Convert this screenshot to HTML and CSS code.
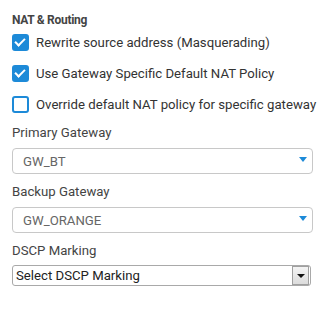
FILE: index.html
```html
<!DOCTYPE html>
<html lang="en">
<head>
  <meta charset="UTF-8" />
  <title>NAT & Routing</title>
  <link rel="stylesheet" href="styles.css">
</head>
<body>
  <section class="panel">
    <h4 class="panel-title">NAT &amp; Routing</h4>

    <label class="check-row">
      <span class="box checked"></span>
      Rewrite source address (Masquerading)
    </label>
    <label class="check-row">
      <span class="box checked"></span>
      Use Gateway Specific Default NAT Policy
    </label>
    <label class="check-row">
      <span class="box"></span>
      Override default NAT policy for specific gateway
    </label>

    <div class="field">
      <div class="field-label">Primary Gateway</div>
      <div class="dropdown">
        <span>GW_BT</span>
        <span class="caret"></span>
      </div>
    </div>

    <div class="field">
      <div class="field-label">Backup Gateway</div>
      <div class="dropdown">
        <span>GW_ORANGE</span>
        <span class="caret"></span>
      </div>
    </div>

    <div class="field">
      <div class="field-label">DSCP Marking</div>
      <div class="native-select">
        <span>Select DSCP Marking</span>
        <span class="native-btn"><span class="native-caret"></span></span>
      </div>
    </div>
  </section>
</body>
</html>
```

FILE: styles.css
```css
body {
  margin: 0;
  background: #ffffff;
  font-family: Roboto, Arial, sans-serif;
  color: #333333;
}

.panel {
  padding: 13px 20px 0 12px;
}

.panel-title {
  margin: 0 0 7px 0;
  font-size: 12px;
  font-weight: bold;
  color: #444444;
  letter-spacing: -0.3px;
}

.check-row {
  display: flex;
  align-items: center;
  gap: 7px;
  height: 17px;
  margin-bottom: 14px;
  font-size: 13.2px;
  white-space: nowrap;
  color: #333333;
}

.check-row:last-of-type {
  margin-bottom: 12px;
}

.box {
  width: 13px;
  height: 13px;
  border: 2px solid #1d8ad8;
  border-radius: 3px;
  background: #ffffff;
  position: relative;
  flex: none;
}

.box.checked {
  background: #1d8ad8;
}

.box.checked::after {
  content: "";
  position: absolute;
  left: 3px;
  top: 0;
  width: 4px;
  height: 8px;
  border: solid #ffffff;
  border-width: 0 2.5px 2.5px 0;
  transform: rotate(45deg);
}

.field-label {
  font-size: 13.2px;
  line-height: 16px;
  color: #444444;
  margin-bottom: 7px;
}

.dropdown {
  display: flex;
  align-items: center;
  justify-content: space-between;
  height: 24px;
  border: 1px solid #c8c8c8;
  border-radius: 4px;
  padding: 0 5px 0 10px;
  font-size: 13.2px;
  color: #666666;
  margin-bottom: 10px;
}

.caret {
  width: 0;
  height: 0;
  border-left: 4.5px solid transparent;
  border-right: 4.5px solid transparent;
  border-top: 5px solid #1d8ad8;
  margin-top: -4px;
}

.field:last-child .field-label {
  margin-bottom: 6px;
}

.native-select {
  box-sizing: border-box;
  display: flex;
  align-items: center;
  justify-content: space-between;
  height: 21px;
  width: 299px;
  border: 1px solid #a9a9a9;
  border-radius: 3px;
  padding-left: 3px;
  font-size: 13.2px;
  color: #222222;
}

.native-btn {
  width: 15px;
  height: 17px;
  margin-right: 1px;
  border: 1px solid #a0a0a0;
  background: linear-gradient(#f4f4f4, #dcdcdc);
  display: flex;
  align-items: center;
  justify-content: center;
}

.native-caret {
  width: 0;
  height: 0;
  border-left: 4px solid transparent;
  border-right: 4px solid transparent;
  border-top: 4px solid #111111;
}
```
